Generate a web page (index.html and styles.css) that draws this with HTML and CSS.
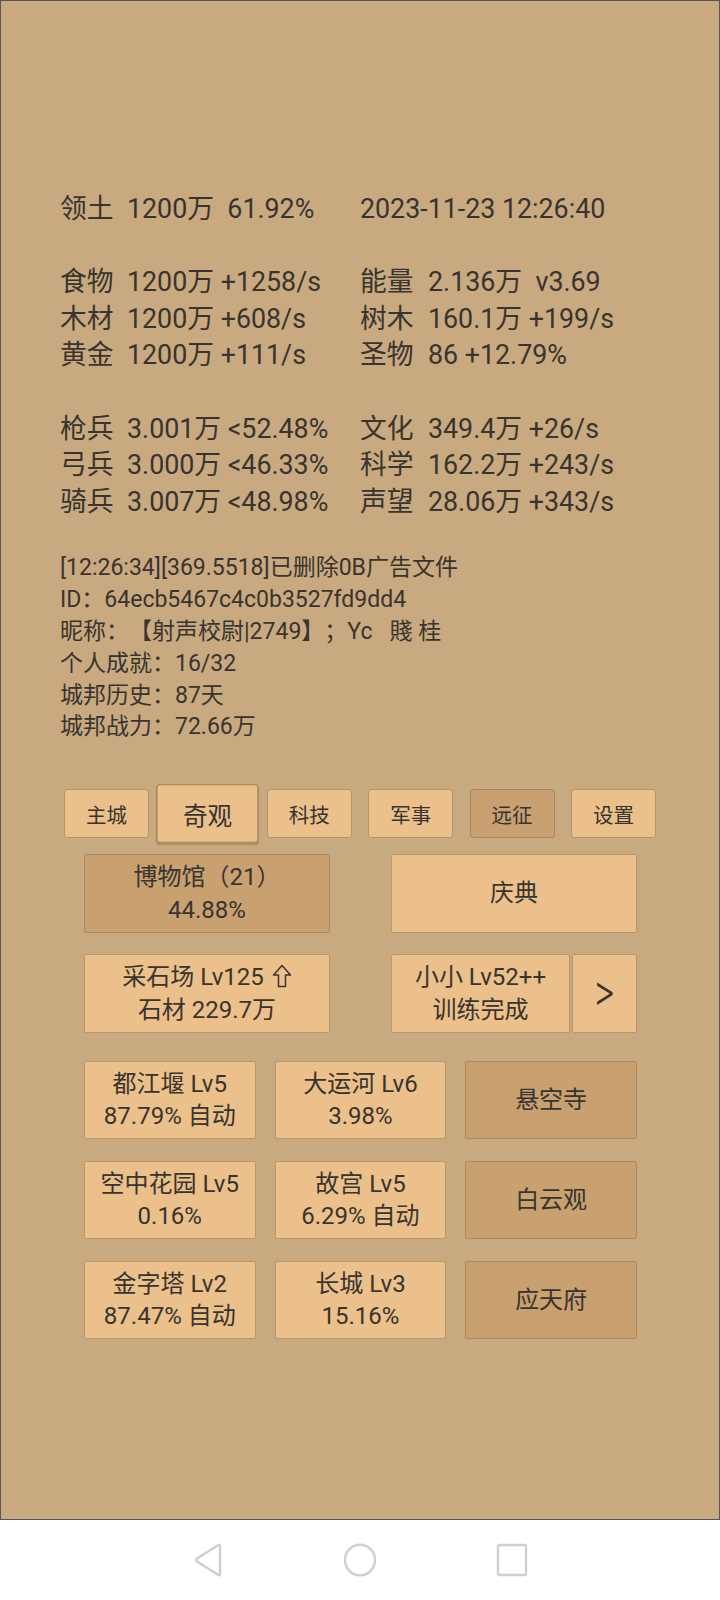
FILE: index.html
```html
<!DOCTYPE html>
<html lang="zh">
<head>
<meta charset="utf-8">
<title>城邦</title>
<link rel="stylesheet" href="styles.css">
</head>
<body>
<div class="frame">
  <div class="stats">
    <div class="row"><span class="cell"><span class="lbl">领土</span><span class="val">1200万  61.92%</span></span><span class="cell right"><span class="val">2023-11-23 12:26:40</span></span></div>
    <div class="row"></div>
    <div class="row"><span class="cell"><span class="lbl">食物</span><span class="val">1200万 +1258/s</span></span><span class="cell right"><span class="lbl">能量</span><span class="val">2.136万  v3.69</span></span></div>
    <div class="row"><span class="cell"><span class="lbl">木材</span><span class="val">1200万 +608/s</span></span><span class="cell right"><span class="lbl">树木</span><span class="val">160.1万 +199/s</span></span></div>
    <div class="row"><span class="cell"><span class="lbl">黄金</span><span class="val">1200万 +111/s</span></span><span class="cell right"><span class="lbl">圣物</span><span class="val">86 +12.79%</span></span></div>
    <div class="row"></div>
    <div class="row"><span class="cell"><span class="lbl">枪兵</span><span class="val">3.001万 &lt;52.48%</span></span><span class="cell right"><span class="lbl">文化</span><span class="val">349.4万 +26/s</span></span></div>
    <div class="row"><span class="cell"><span class="lbl">弓兵</span><span class="val">3.000万 &lt;46.33%</span></span><span class="cell right"><span class="lbl">科学</span><span class="val">162.2万 +243/s</span></span></div>
    <div class="row"><span class="cell"><span class="lbl">骑兵</span><span class="val">3.007万 &lt;48.98%</span></span><span class="cell right"><span class="lbl">声望</span><span class="val">28.06万 +343/s</span></span></div>
  </div>

  <div class="info">
    <div class="line">[12:26:34][369.5518]已删除0B广告文件</div>
    <div class="line">ID：64ecb5467c4c0b3527fd9dd4</div>
    <div class="line">昵称：【射声校尉|2749】；Yc   賤 桂</div>
    <div class="line">个人成就：16/32</div>
    <div class="line">城邦历史：87天</div>
    <div class="line">城邦战力：72.66万</div>
  </div>

  <div class="tabs">
    <div class="tab">主城</div>
    <div class="tab selected">奇观</div>
    <div class="tab">科技</div>
    <div class="tab">军事</div>
    <div class="tab dark">远征</div>
    <div class="tab">设置</div>
  </div>

  <div class="pair first">
    <div class="btn dark"><span>博物馆（21）<br>44.88%</span></div>
    <div class="btn"><span>庆典</span></div>
  </div>

  <div class="pair second">
    <div class="btn"><span>采石场 Lv125 <svg class="arrow" width="20" height="24" viewBox="0 0 20 24"><path d="M10 1.5 L18.5 11 L13.5 11 L13.5 22.5 L6.5 22.5 L6.5 11 L1.5 11 Z" fill="none" stroke="#3a3631" stroke-width="1.5" stroke-linejoin="round"/></svg><br>石材 229.7万</span></div>
    <div class="split">
      <div class="btn"><span>小小 Lv52++<br>训练完成</span></div>
      <div class="btn chevron"><span class="gt">&gt;</span></div>
    </div>
  </div>

  <div class="grid">
    <div class="btn"><span>都江堰 Lv5<br>87.79% 自动</span></div>
    <div class="btn"><span>大运河 Lv6<br>3.98%</span></div>
    <div class="btn dark"><span>悬空寺</span></div>
    <div class="btn"><span>空中花园 Lv5<br>0.16%</span></div>
    <div class="btn"><span>故宫 Lv5<br>6.29% 自动</span></div>
    <div class="btn dark"><span>白云观</span></div>
    <div class="btn"><span>金字塔 Lv2<br>87.47% 自动</span></div>
    <div class="btn"><span>长城 Lv3<br>15.16%</span></div>
    <div class="btn dark"><span>应天府</span></div>
  </div>
</div>

<div class="navbar">
  <svg class="nav-icon" width="34" height="36" viewBox="0 0 34 36">
    <path d="M29 4 L29 32 Q29 34 27.5 33 L5.5 19.2 Q4.5 18 5.5 16.8 L27.5 3 Q29 2 29 4 Z" fill="none" stroke="#cfcfcf" stroke-width="2.4" stroke-linejoin="round"/>
  </svg>
  <svg class="nav-icon" width="36" height="36" viewBox="0 0 36 36">
    <ellipse cx="18" cy="18" rx="15" ry="15.3" fill="none" stroke="#cfcfcf" stroke-width="2.4"/>
  </svg>
  <svg class="nav-icon" width="34" height="36" viewBox="0 0 34 36">
    <rect x="3" y="3" width="28" height="30" rx="2" fill="none" stroke="#cfcfcf" stroke-width="2.4"/>
  </svg>
</div>
</body>
</html>
```

FILE: styles.css
```css
html, body {
  margin: 0;
  padding: 0;
  background: #ffffff;
}

body {
  width: 720px;
  height: 1600px;
  overflow: hidden;
  font-family: Roboto, "Noto Sans CJK SC", "Noto Sans", sans-serif;
  color: #38342f;
  text-spacing-trim: space-all;
}

.frame {
  box-sizing: border-box;
  width: 720px;
  height: 1520px;
  background: #c9a97f;
  border: 1px solid #5a5654;
  padding-top: 190px;
}

.stats {
  padding-left: 59px;
  font-size: 26.8px;
  line-height: 36.6px;
}

.row {
  display: flex;
  height: 36.6px;
  white-space: pre;
}

.cell {
  display: flex;
  width: 300px;
}

.lbl {
  width: 67px;
}

.cell.right .lbl {
  width: 68px;
}

.info {
  margin-top: 32px;
  padding-left: 59px;
  font-size: 23px;
  line-height: 31.8px;
}

.line {
  white-space: pre;
  height: 31.8px;
}

.tabs {
  margin-top: 46px;
  padding-left: 63px;
  display: flex;
  gap: 16.4px;
}

.tab {
  box-sizing: border-box;
  width: 85px;
  height: 49px;
  display: flex;
  align-items: center;
  justify-content: center;
  background: #ebc08a;
  border: 1px solid #b6956c;
  border-radius: 3px;
  font-size: 20.5px;
}

.tab.selected {
  transform: scale(1.2);
  border-color: #a98a62;
  box-shadow: 0 1px 1px rgba(120, 90, 50, 0.35);
}

.tab.dark {
  background: #c9a072;
  border-color: #a8865d;
}

.pair {
  margin-left: 83px;
  width: 553px;
  display: grid;
  grid-template-columns: 246px 246px;
  column-gap: 61px;
  height: 79px;
}

.pair.first {
  margin-top: 16px;
}

.pair.second {
  margin-top: 21px;
}

.split {
  display: grid;
  grid-template-columns: 179px 65px;
  column-gap: 2px;
}

.btn {
  box-sizing: border-box;
  display: flex;
  align-items: center;
  justify-content: center;
  text-align: center;
  background: #ebc08a;
  border: 1px solid #b8976d;
  border-radius: 2px;
  font-size: 24px;
  line-height: 32.6px;
  white-space: nowrap;
}

.btn.dark {
  background: #c9a070;
  border-color: #a98a62;
}

.gt {
  display: inline-block;
  font-size: 44px;
  font-weight: 300;
  transform: scale(0.85, 1.2);
}

.arrow {
  display: inline-block;
  vertical-align: -3px;
  margin-left: 2px;
}

.grid {
  margin-top: 28px;
  margin-left: 83px;
  width: 553px;
  display: grid;
  grid-template-columns: repeat(3, 171.5px);
  grid-auto-rows: 78px;
  column-gap: 19.2px;
  row-gap: 22px;
}

.navbar {
  height: 80px;
  display: flex;
  align-items: center;
  justify-content: center;
  gap: 117px;
}

.nav-icon {
  display: block;
}
```
